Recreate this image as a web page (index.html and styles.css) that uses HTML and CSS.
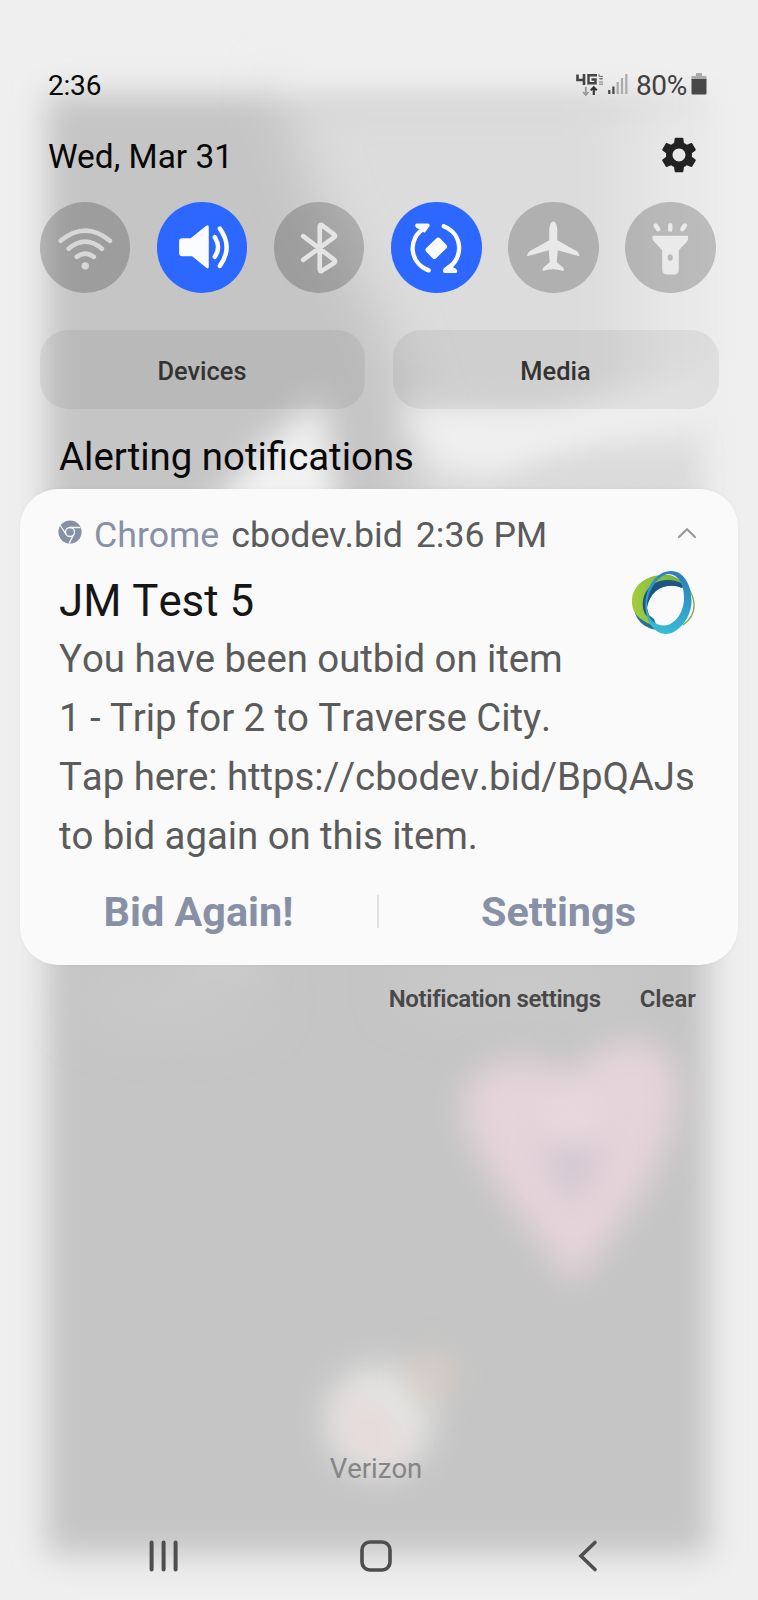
FILE: index.html
```html
<!DOCTYPE html>
<html lang="en">
<head>
<meta charset="utf-8">
<title>Notifications</title>
<link rel="stylesheet" href="styles.css">
</head>
<body>
<div class="phone">
  <svg class="wallpaper" viewBox="0 0 758 1600" aria-hidden="true">
    <defs>
      <filter id="soft" filterUnits="userSpaceOnUse" x="-100" y="-100" width="958" height="1800"><feGaussianBlur stdDeviation="16"/></filter>
      <filter id="wide" filterUnits="userSpaceOnUse" x="-100" y="-100" width="958" height="1800"><feGaussianBlur stdDeviation="26"/></filter>
      <linearGradient id="fadeRight" x1="0" x2="1"><stop offset="0" stop-color="#dcdcdc"/><stop offset=".68" stop-color="#dcdcdc"/><stop offset=".85" stop-color="#e8e8e8"/><stop offset="1" stop-color="#eeeeee"/></linearGradient>
    </defs>
    <rect width="758" height="1600" fill="#efefef"/>
    <rect x="46" y="94" width="664" height="1461" fill="#c5c5c5" filter="url(#soft)"/>
    <path d="M275 84H740V520H400L415 420 385 330 325 220Z" fill="url(#fadeRight)" filter="url(#wide)"/>
    <rect x="280" y="20" width="478" height="66" fill="#efefef" filter="url(#soft)"/>
    <path d="M395 405L540 410 720 370V415L590 450 500 475 440 470Z" fill="#f0f0f0" filter="url(#soft)"/>
    <path d="M500 500L540 470 700 440V520H500Z" fill="#dadada" filter="url(#soft)"/>
    <path d="M322 397L340 520H200L265 445Z" fill="#f2f2f2" filter="url(#soft)"/>
    <rect x="718" y="60" width="60" height="520" fill="#efefef" filter="url(#soft)"/>
    <ellipse cx="220" cy="965" rx="42" ry="10" fill="#d2d2d2" filter="url(#soft)"/>
    <ellipse cx="170" cy="1000" rx="90" ry="22" fill="#cbcbcb" filter="url(#wide)"/>
    <ellipse cx="520" cy="985" rx="120" ry="18" fill="#cccccc" filter="url(#wide)"/>
    <path d="M572 1286C550 1250 464 1155 462 1110C468 1050 535 1050 568 1075C600 1040 657 1020 676 1075C686 1135 640 1205 572 1286Z" fill="#e5d4da" filter="url(#soft)"/>
    <path d="M573 1210L538 1145H608Z" fill="#d2c8d0" filter="url(#soft)"/>
    <ellipse cx="572" cy="1116" rx="20" ry="16" fill="#ebdde3" filter="url(#soft)"/>
    <ellipse cx="379" cy="1420" rx="54" ry="56" fill="#e3e3e2" filter="url(#soft)"/>
    <path d="M350 1408L390 1455" stroke="#e7d7d7" stroke-width="34" filter="url(#soft)"/>
    <ellipse cx="432" cy="1376" rx="20" ry="22" fill="#dccfc5" filter="url(#soft)"/>
  </svg>

  <header class="status">
    <span class="clock">2:36</span>
    <span class="indicators">
      <svg class="network" viewBox="0 0 28 24">
        <path d="M1.500 1.500V7H9M8 1V12" fill="none" stroke="#444" stroke-width="2.600"/>
        <path d="M21 2.200H12.500V10.200H19.500V6.500H15.500" fill="none" stroke="#444" stroke-width="2.400"/>
        <path d="M23 1V3.400H27M23 5.700H27M25 4.600V7M23 9H27M23 11.200H27" fill="none" stroke="#777" stroke-width="1"/>
        <path d="M9.800 14V21.500M7 19L9.800 22 12.600 19" fill="none" stroke="#999" stroke-width="1.800"/>
        <path d="M17.800 22V14.800M14.800 17.400L17.800 14.200 20.800 17.400" fill="none" stroke="#333" stroke-width="2.100"/>
      </svg>
      <svg class="signal" viewBox="0 0 20 22">
        <path d="M1.300 17V21M5.400 13.500V21" stroke="#444" stroke-width="2.200"/><path d="M9.700 9V21M14 5V21M18.300 1V21" stroke="#aaa" stroke-width="2.200"/>
      </svg>
      <span class="percent">80%</span>
      <svg class="battery" viewBox="0 0 16 22"><path d="M5 0H11V3H15.500V7H.5V3H5Z" fill="#aaa"/><path d="M.5 6H15.500V20.500Q15.500 21.500 14.500 21.500H1.500Q.5 21.500 .5 20.500Z" fill="#484848"/></svg>
    </span>
  </header>

  <div class="dateline">
    <span class="date">Wed, Mar 31</span>
    <svg class="gear" viewBox="2 2 20 20"><path fill="#222" d="M19.14 12.94c.04-.3.06-.61.06-.94 0-.32-.02-.64-.07-.94l2.03-1.58c.18-.14.23-.41.12-.61l-1.92-3.32c-.12-.22-.37-.29-.59-.22l-2.39.96c-.5-.38-1.03-.7-1.62-.94L14.4 2.81c-.04-.24-.24-.41-.48-.41h-3.84c-.24 0-.43.17-.47.41L9.25 5.35C8.66 5.59 8.12 5.92 7.63 6.29L5.24 5.33c-.22-.08-.47 0-.59.22L2.74 8.87c-.12.21-.08.47.12.61l2.03 1.58c-.05.3-.09.63-.09.94s.02.64.07.94l-2.03 1.58c-.18.14-.23.41-.12.61l1.92 3.32c.12.22.37.29.59.22l2.39-.96c.5.38 1.03.7 1.62.94l.36 2.54c.05.24.24.41.48.41h3.84c.24 0 .44-.17.47-.41l.36-2.54c.59-.24 1.13-.56 1.62-.94l2.39.96c.22.08.47 0 .59-.22l1.92-3.32c.12-.22.07-.47-.12-.61l-2.01-1.58zM12 15.6c-1.98 0-3.6-1.62-3.6-3.6s1.62-3.6 3.6-3.6 3.6 1.62 3.6 3.6-1.62 3.6-3.6 3.6z"/></svg>
  </div>

  <div class="toggles">
    <div class="toggle"><svg viewBox="0 0 90 90"><g fill="none" stroke="#d7d7d7" stroke-width="4.600" stroke-linecap="round"><path d="M20.500 38.500Q45 18.500 69.500 38.500M28.500 46.500Q45 32.500 61.500 46.500M36.500 54.500Q45 48 53.500 54.500"/></g><circle cx="45" cy="63.500" r="3.700" fill="#d7d7d7"/></svg></div>
    <div class="toggle on"><svg viewBox="0 0 90 90"><path d="M25 36H33.500L49 23.500Q51.500 22 51.500 25V64Q51.500 67.500 49 65.500L35 54H25Q22 54 22 51V39Q22 36 25 36Z" fill="#fafcff"/><path d="M57.500 35Q64 45 57.500 54.500M62.500 26.500Q76 45 62.500 63.500" fill="none" stroke="#fafcff" stroke-width="4.400" stroke-linecap="round"/></svg></div>
    <div class="toggle"><svg viewBox="0 0 90 90"><path d="M29 34L60 57.500Q61.500 59 60 60.500L47.500 68.500Q45.500 69.500 45.500 67V24.500Q45.500 22 47.500 23L60 32.500Q61.500 34 60 35L29 57.500" fill="none" stroke="#e4e4e4" stroke-width="4.600" stroke-linecap="round" stroke-linejoin="round"/></svg></div>
    <div class="toggle on"><svg viewBox="0 0 90 90"><g fill="none" stroke="#fafcff" stroke-width="4.300" stroke-linecap="round"><path d="M33 26.500C17 35 17 60 37.500 68M52.500 24C72 32 72 56 57 65.500"/></g><path d="M25.500 21.500H36.500Q39.500 21.700 38 24.500L33.500 30.500L28 27Q24 25.500 24 23Q24 21.500 25.500 21.500ZM53.500 70.500H64Q65.800 70.500 65.800 69Q65.800 66.500 62.500 65.500L58 62L52.500 66Q50.500 70.500 53.500 70.500Z" fill="#fafcff"/><rect x="35.500" y="39" width="19" height="14" rx="2.500" transform="rotate(-44 45 46)" fill="#fafcff"/></svg></div>
    <div class="toggle"><svg viewBox="0 0 90 90"><path d="M45 19.500C48 19.500 49 25 49 28V38L68.500 49Q71 50.500 71 54L49.500 48 48.500 60 54.500 65Q56 66.500 55.500 68.500Q45 65.500 34.500 68.500Q34 66.500 35.500 65L41.500 60 40.500 48 19 54Q19 50.500 21.500 49L41 38V28C41 25 42 19.500 45 19.500Z" fill="#e9e9e9"/></svg></div>
    <div class="toggle"><svg viewBox="0 0 90 90"><path fill-rule="evenodd" d="M27.500 33.500H62.500Q63.500 37.500 61.500 39.500L53.500 48V67Q53.500 72 49.500 72H41.500Q37 72 37 67V48L29 39.500Q26.500 37.500 27.500 33.500ZM45 52A2.500 3.200 0 0 0 45 58.500A2.500 3.200 0 0 0 45 52Z" fill="#eaeaea"/><path d="M45 23V27.500M30.500 23.500L33 27M59.500 23.500L57 27" fill="none" stroke="#eaeaea" stroke-width="4.400" stroke-linecap="round"/></svg></div>
  </div>

  <div class="pills"><div class="pill">Devices</div><div class="pill">Media</div></div>

  <h2 class="section">Alerting notifications</h2>

  <section class="card">
    <div class="source">
      <svg class="chrome" viewBox="0 0 24 24"><circle cx="12" cy="12" r="11.600" fill="#858fa5"/><g fill="none" stroke="#fafafa" stroke-width="1.300"><circle cx="12" cy="12" r="4.500"/><path d="M12 7.500H22.500M8.100 14.300L2.300 5.500M15.900 14.300L11 23.500"/></g></svg>
      <span class="app">Chrome</span><span class="site">cbodev.bid</span><span class="time">2:36 PM</span>
      <svg class="chevron" viewBox="0 0 20 12"><path d="M2 10L10 2.200 18 10" fill="none" stroke="#999" stroke-width="2.200" stroke-linecap="round"/></svg>
    </div>
    <div class="heading">
      <h3 class="title">JM Test 5</h3>
      <svg class="logo" viewBox="0 0 66 66">
        <defs><linearGradient id="blue" x1=".6" y1="0" x2=".4" y2="1"><stop offset="0" stop-color="#2c7fbb"/><stop offset="1" stop-color="#38bdd8"/></linearGradient><linearGradient id="green" x1="0" x2="1"><stop offset="0" stop-color="#a4cd3c"/><stop offset="1" stop-color="#6fae46"/></linearGradient></defs>
        <path fill="#24718f" d="M4 40C7 55 18 60 28 61L24 50 14 42Z"/>
        <path fill="url(#green)" d="M2 30C4 13 21 4 40 6Q47 8 52 13V17C38 8 24 12 17 21C12 30 15 42 22 56C7 50 1 42 2 30Z"/>
        <path fill="none" stroke="#7ab648" stroke-width="1.400" d="M57 16C67 32 67 46 53 56"/>
        <path fill="#1d5680" d="M13 39C11 20 25 10 40 11Q50 12 55 17L52 19C38 12 20 20 17 39L20 50Q14 46 13 39Z"/>
        <path fill-rule="evenodd" fill="url(#blue)" d="M15.500 37C15 18 27 2 41 2C55 2 61.500 18 61.500 32C61.500 49 48 65 36 65C23 65 15.500 50 15.500 37ZM17 37C17 50 25 56.500 34 56.500C46 56 54 42 54 29C54 16 49 6 39 5C27 6 17 23 17 37Z"/>
        <path fill="#1d5680" d="M22 24C30 13 45 12 52 19C43 15 31 16 22 24Z"/>
      </svg>
    </div>
    <p class="message">You have been outbid on item<br>1 - Trip for 2 to Traverse City.<br>Tap here: https://cbodev.bid/BpQAJs<br>to bid again on this item.</p>
    <div class="actions"><span class="action bid">Bid Again!</span><span class="action prefs">Settings</span></div>
  </section>

  <div class="footer"><span class="manage">Notification settings</span><span class="clear">Clear</span></div>

  <div class="carrier">Verizon</div>
  <nav class="nav">
    <svg viewBox="0 0 34 34"><path d="M4.600 3.500V30.500M16.600 3.500V30.500M28.600 3.500V30.500" stroke="#4e4e4e" stroke-width="4" stroke-linecap="round"/></svg>
    <svg viewBox="0 0 34 34"><rect x="3" y="3" width="28" height="28" rx="8" fill="none" stroke="#4e4e4e" stroke-width="3.600"/></svg>
    <svg viewBox="0 0 34 34"><path d="M24 3.500L10 17 24 30.500" fill="none" stroke="#4e4e4e" stroke-width="3.600" stroke-linecap="round"/></svg>
  </nav>
</div>
</body>
</html>
```
FILE: styles.css
```css
* { box-sizing: border-box; }
body { margin: 0; background: #efefef; font-family: Roboto, "Liberation Sans", sans-serif; color: #080808; }
h2, h3, p { margin: 0; font-weight: 400; }
svg { display: block; flex: none; }

.phone { position: relative; width: 758px; height: 1600px; overflow: hidden; display: flex; flex-direction: column; }
.phone > * { position: relative; flex: none; white-space: nowrap; }
.phone > .wallpaper { position: absolute; inset: 0; width: 758px; height: 1600px; }

.status { height: 100px; padding: 71px 51px 0 48px; display: flex; justify-content: space-between; line-height: 30px; font-size: 28px; }
.clock { letter-spacing: -.2px; }
.indicators { display: flex; }
.network { width: 28px; height: 24px; margin: 2px 4px 0 0; }
.signal { width: 20px; height: 22px; margin: 2px 8px 0 0; }
.percent { color: #404040; letter-spacing: -.3px; margin-right: 4px; }
.battery { width: 16px; height: 22px; margin-top: 2px; }

.dateline { height: 102px; padding: 37px 61px 0 48px; display: flex; justify-content: space-between; line-height: 40px; }
.date { font-size: 33.4px; }
.gear { width: 36px; height: 36px; }

.toggles { display: flex; justify-content: space-between; padding: 0 42px 0 39.5px; height: 91px; }
.toggle { width: 90.5px; height: 90.5px; border-radius: 50%; background: rgba(0, 0, 0, .2); }
.toggle svg { width: 90.5px; height: 90.5px; }
.toggle.on { background: #2c67ff; }

.pills { display: grid; grid-template: 79px / 325px 326px; gap: 28px; margin: 37px 0 0 39.5px; height: 79px; }
.pill { border-radius: 28px; background: rgba(0, 0, 0, .06); font-size: 25.4px; font-weight: 500; color: #333; line-height: 83px; text-align: center; }

.section { height: 80px; padding: 25px 0 0 59px; font-size: 38.4px; line-height: 46px; }

.card { margin: 0 20px; height: 476px; border-radius: 38px; background: #fafafa; padding: 22px 39px 0; box-shadow: 0 0 4px rgba(0, 0, 0, .04); }
.source { display: flex; height: 48px; font-size: 35.7px; line-height: 48px; color: #5b5b5b; }
.chrome { width: 24px; height: 24px; margin: 9px 12px 0 -1px; }
.app { color: #8790a5; margin-right: 12px; }
.site { margin-right: 13px; }
.chevron { width: 20px; height: 12px; margin: 16px 2px 0 auto; }
.heading { display: flex; justify-content: space-between; height: 74px; }
.title { font-size: 43.8px; line-height: 50px; padding-top: 17px; color: #161616; font-kerning: none; }
.logo { width: 66px; height: 66px; margin: 10px 3px 0 0; }
.message { font-size: 38.4px; line-height: 59px; color: #5b5b5b; margin-top: -4px; font-kerning: none; letter-spacing: -.06px; }
.actions { display: grid; grid-template-columns: 1fr 1fr; margin: 19px -39px 0; height: 48px; }
.action { font-size: 41.4px; font-weight: 700; line-height: 48px; color: #8790a5; text-align: center; }
.bid { border-right: 2px solid #e2e2e2; height: 33px; margin-top: 11px; line-height: 35px; }
.prefs { padding-top: 4px; }

.footer { height: 60px; display: flex; justify-content: flex-end; gap: 39px; padding: 18px 62px 0 0; font-size: 24px; line-height: 32px; font-weight: 600; color: #484848; }
.manage { letter-spacing: -.35px; }
.carrier { margin-top: 426px; height: 36px; line-height: 36px; font-size: 27.5px; text-align: center; color: #858585; padding-right: 6px; font-kerning: none; }
.nav { display: flex; justify-content: space-between; padding: 0 153px 0 147px; margin-top: 52px; }
.nav svg { width: 34px; height: 34px; }
```
